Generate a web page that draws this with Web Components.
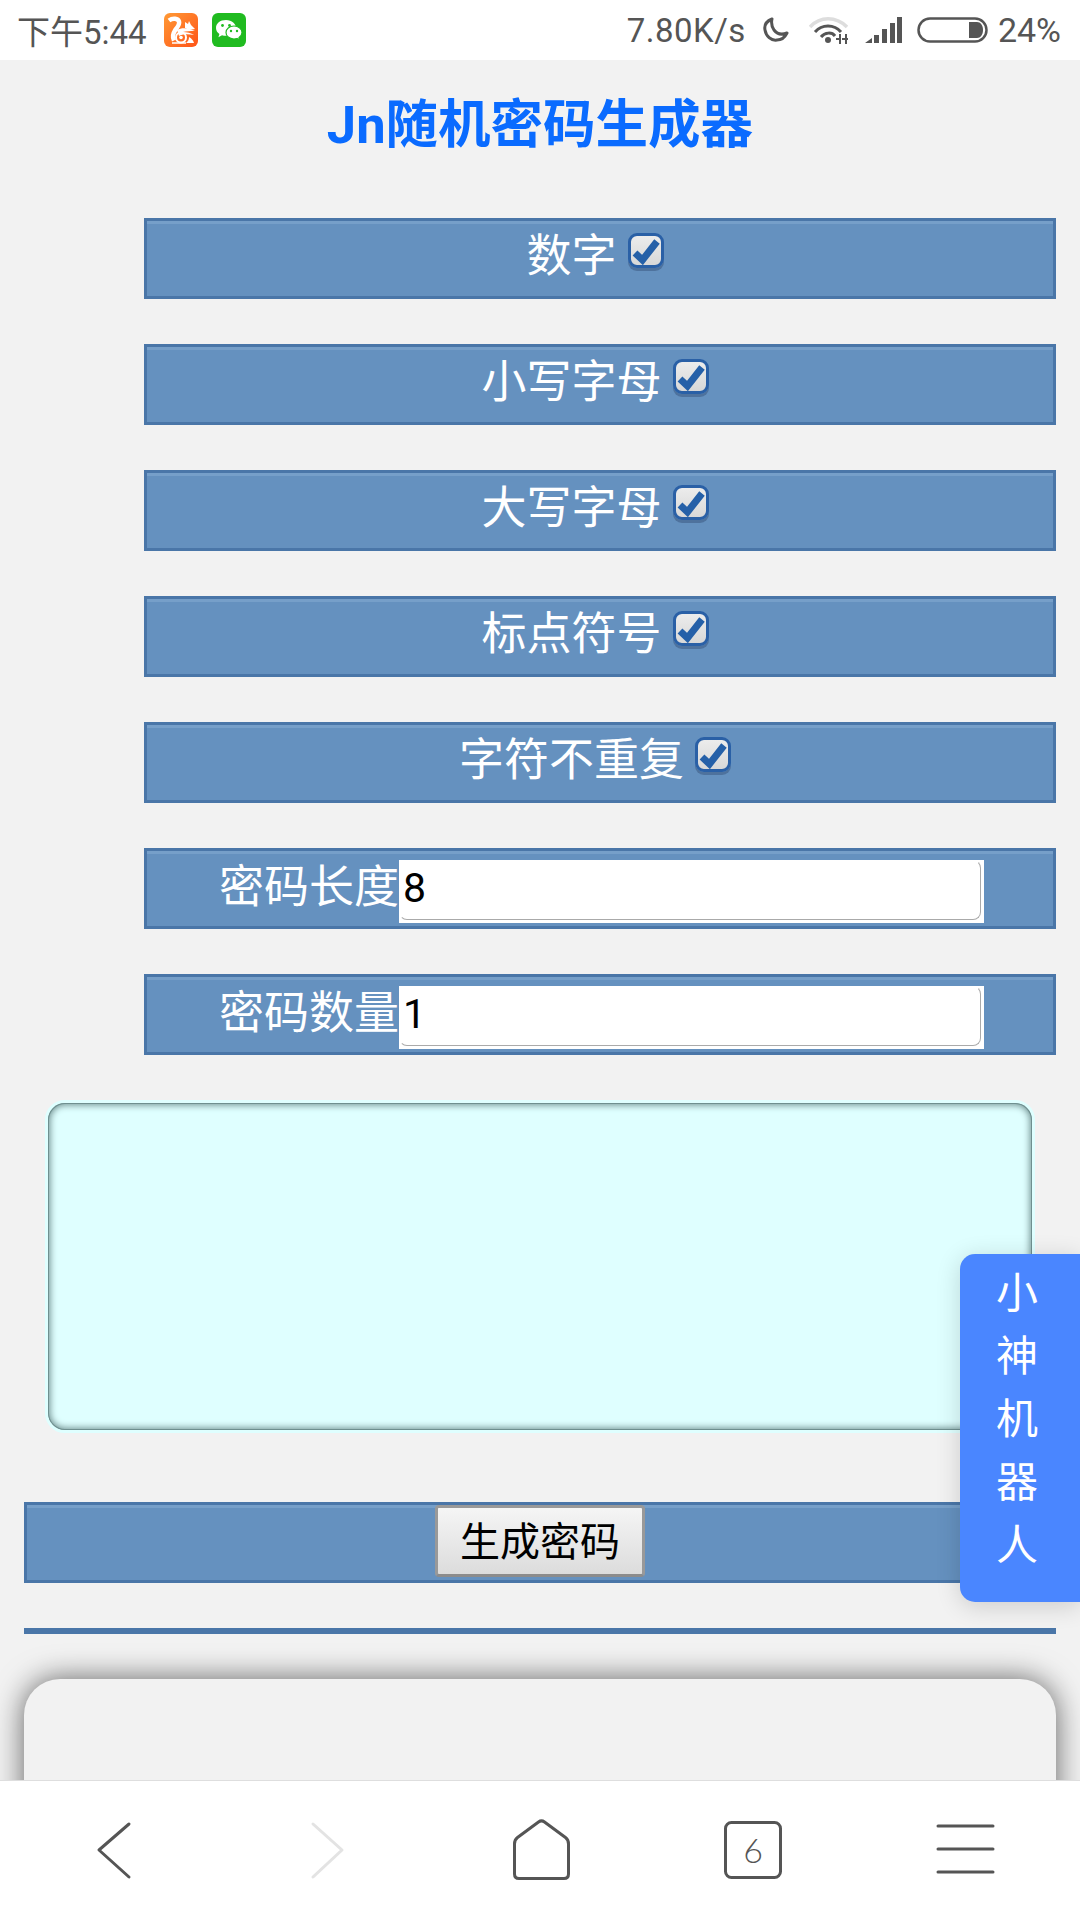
<!DOCTYPE html>
<html lang="zh">
<head>
<meta charset="utf-8">
<title>Jn随机密码生成器</title>
<style>
    html, body { margin: 0; padding: 0; height: 100%; }
    body {
        width: 1080px;
        height: 1920px;
        display: flex;
        flex-direction: column;
        overflow: hidden;
        background: #f2f2f2;
        font-family: Roboto, "Noto Sans CJK SC", sans-serif;
    }
</style>
</head>
<body>
<status-bar></status-bar>
<generator-page>
    <option-row>数字</option-row>
    <option-row>小写字母</option-row>
    <option-row>大写字母</option-row>
    <option-row>标点符号</option-row>
    <option-row>字符不重复</option-row>
    <number-row label="密码长度" value="8"></number-row>
    <number-row label="密码数量" value="1"></number-row>
</generator-page>
<bottom-nav></bottom-nav>

<script>
class StatusBar extends HTMLElement {
    constructor() {
        super();
        const shadowRoot = this.attachShadow({mode: 'open'});
        shadowRoot.innerHTML = `
            <style>
                :host {
                    display: flex;
                    align-items: center;
                    flex: none;
                    height: 60px;
                    padding: 0 19px 0 17px;
                    box-sizing: border-box;
                    background: #fff;
                    color: #555;
                    font: 33px Roboto, "Noto Sans CJK SC", sans-serif;
                    white-space: nowrap;
                }
                svg { display: block; flex: none; }
                .time { margin-right: 17px; }
                .app { margin-right: 14px; }
                .spacer { flex: 1; }
                .speed { margin-right: 16px; letter-spacing: .5px; }
                .moon { margin-right: 20px; }
                .wifi { margin-right: 17px; }
                .signal { margin-right: 15px; }
                .battery { margin-right: 10px; }
                .level { font-size: 34px; }
            </style>
            <span class="time">下午5:44</span>
            <svg class="app" width="34" height="34" viewBox="0 0 34 34">
                <defs>
                    <linearGradient id="uc" x1="0" y1="0" x2="1" y2="1">
                        <stop offset="0" stop-color="#ff9a35"/>
                        <stop offset="1" stop-color="#ff5418"/>
                    </linearGradient>
                </defs>
                <rect width="34" height="34" rx="6" fill="url(#uc)"/>
                <path d="M5 7.500c4-3 9-2 10 1 1 3-2 6-4 9-2 3-3 6-1 10" fill="none" stroke="#fff" stroke-width="4.500"/>
                <path d="M21 9l3 2 1-3 2 4 4 4-6 1-4-2z" fill="#fff"/>
                <path d="M13 17c5-3 12-2 18 1-5 0-9 0-12 1 4 0 8 1 11 3-6-1-12-1-15 1z" fill="#fff"/>
                <circle cx="17" cy="24.500" r="5" fill="none" stroke="#fff" stroke-width="2"/>
                <circle cx="17" cy="24.500" r="1.800" fill="#fff"/>
                <path d="M22 30h8c-1-3-2-4-5-6 0 3-1 4-3 6z" fill="#fff"/>
                <path d="M8 30h14" stroke="#fff" stroke-width="1.500"/>
            </svg>
            <svg class="app" width="34" height="34" viewBox="0 0 34 34">
                <rect width="34" height="34" rx="6" fill="#20bb20"/>
                <path d="M14 7c-6 0-10 3.500-10 8 0 2.500 1.300 4.500 3.400 6l-1 3.200 3.600-2c1.300.4 2.600.6 4 .6 6 0 10-3.800 10-7.800S20 7 14 7z" fill="#fff"/>
                <circle cx="10.500" cy="12.500" r="1.400" fill="#20bb20"/>
                <circle cx="17.500" cy="12.500" r="1.400" fill="#20bb20"/>
                <path d="M22 13c-4.800 0-8 3-8 6.500s3.200 6.500 8 6.500c1 0 2-.2 3-.5l2.800 1.600-.8-2.600c1.800-1.200 3-3 3-5 0-3.500-3.200-6.500-8-6.500z" fill="#fff" stroke="#20bb20" stroke-width="1.200"/>
                <circle cx="19" cy="18" r="1.200" fill="#20bb20"/>
                <circle cx="25" cy="18" r="1.200" fill="#20bb20"/>
            </svg>
            <span class="spacer"></span>
            <span class="speed">7.80K/s</span>
            <svg class="moon" width="27" height="26" viewBox="0 0 27 26">
                <path d="M10 2C5 4 2 8 3 13c1 6 6 11 12 10 4 0 8-3 10-7-5 2-10 1-13-3-2-3-3-7-2-11z" fill="none" stroke="#555" stroke-width="3" stroke-linejoin="round"/>
            </svg>
            <svg class="wifi" width="39" height="28" viewBox="0 0 39 28">
                <path d="M1 11C11 0 27 0 38 11" fill="none" stroke="#ddd" stroke-width="3.500"/>
                <path d="M6 16C13 8 25 8 32 16" fill="none" stroke="#555" stroke-width="3"/>
                <path d="M12 21C16 16 23 16 26 20" fill="none" stroke="#555" stroke-width="3"/>
                <circle cx="19" cy="24" r="3" fill="#555"/>
                <path d="M31 18v10M37 18v10M27 23h3M33 23h6" fill="none" stroke="#555" stroke-width="2"/>
            </svg>
            <svg class="signal" width="37" height="26" viewBox="0 0 37 26">
                <path d="M0 26l7-5v5zM9 26v-8h5v8zM17 26V12h5v14zM25 26V6h5v20zM32 26V0h5v26z" fill="#555"/>
            </svg>
            <svg class="battery" width="71" height="26" viewBox="0 0 71 26">
                <rect x="1.500" y="1.500" width="68" height="23" rx="11.500" fill="none" stroke="#555" stroke-width="2.500"/>
                <path d="M52 5h8c3.500 0 6 3.500 6 8s-2.500 8-6 8h-8z" fill="#555"/>
            </svg>
            <span class="level">24%</span>
        `;
    }
}

class OptionRow extends HTMLElement {
    constructor() {
        super();
        const shadowRoot = this.attachShadow({mode: 'open'});
        shadowRoot.innerHTML = `
            <style>
                :host {
                    display: flex;
                    align-items: center;
                    justify-content: center;
                    gap: 11px;
                    height: 81px;
                    margin-left: 144px;
                    padding: 0 10px 0 0;
                    box-sizing: border-box;
                    background: #6591bf;
                    border: 3px solid #4a76a8;
                    box-shadow: inset 0 3px 0 #769fc9;
                    color: #fff;
                    font-size: 45px;
                    line-height: 60px;
                }
                .label { position: relative; top: -2px; }
                .box {
                    width: 36px;
                    height: 35px;
                    margin-top: -16px;
                    box-sizing: border-box;
                    border: 3px solid #2a60a6;
                    border-radius: 9px;
                    background: linear-gradient(#ececec, #d8d8d8);
                    box-shadow: 0 3px 0 rgba(60, 90, 130, .55);
                }
                svg { display: block; }
            </style>
            <span class="label"><slot></slot></span>
            <div class="box">
                <svg width="30" height="29" viewBox="0 0 30 29">
                    <path d="M4 17l7.500 7L26 5.500" fill="none" stroke="#2560a8" stroke-width="7"/>
                </svg>
            </div>
        `;
    }
}

class NumberRow extends HTMLElement {
    constructor() {
        super();
        const shadowRoot = this.attachShadow({mode: 'open'});
        shadowRoot.innerHTML = `
            <style>
                :host {
                    display: flex;
                    align-items: flex-start;
                    height: 81px;
                    margin-left: 144px;
                    padding: 9px 0 0 72px;
                    box-sizing: border-box;
                    background: #6591bf;
                    border: 3px solid #4a76a8;
                    box-shadow: inset 0 3px 0 #769fc9;
                    color: #fff;
                    font-size: 45px;
                }
                .label { width: 180px; line-height: 56px; }
                .field {
                    width: 585px;
                    height: 63px;
                    box-sizing: border-box;
                    padding: 0 3px 3px 0;
                    background: #fff;
                }
                .value {
                    height: 60px;
                    box-sizing: border-box;
                    padding-left: 3px;
                    border: 1px solid #aaa;
                    border-top-color: #fff;
                    border-left-color: #fff;
                    border-radius: 8px;
                    color: #000;
                    font-size: 41px;
                    line-height: 55px;
                }
            </style>
            <span class="label"></span>
            <div class="field"><div class="value"></div></div>
        `;
        shadowRoot.querySelector('.label').textContent = this.getAttribute('label');
        shadowRoot.querySelector('.value').textContent = this.getAttribute('value');
    }
}

class OutputBox extends HTMLElement {
    constructor() {
        super();
        const shadowRoot = this.attachShadow({mode: 'open'});
        shadowRoot.innerHTML = `
            <style>
                :host {
                    display: block;
                    height: 333px;
                    margin: 45px 45px 0;
                    box-sizing: border-box;
                    background: #dfffff;
                    border: 3px solid #dfffff;
                    border-radius: 20px;
                }
                .inner {
                    height: 100%;
                    box-sizing: border-box;
                    border-radius: 17px;
                    box-shadow: inset 0 0 0 1px #6f8f8f, inset 0 0 7px 2px #6d8d8d;
                }
            </style>
            <div class="inner"></div>
        `;
    }
}

class GenerateRow extends HTMLElement {
    constructor() {
        super();
        const shadowRoot = this.attachShadow({mode: 'open'});
        shadowRoot.innerHTML = `
            <style>
                :host {
                    display: flex;
                    justify-content: center;
                    height: 81px;
                    margin: 69px 24px 0;
                    box-sizing: border-box;
                    background: #6591bf;
                    border: 3px solid #4a76a8;
                    box-shadow: inset 0 3px 0 #769fc9;
                }
                .button {
                    display: flex;
                    align-items: center;
                    justify-content: center;
                    width: 210px;
                    height: 72px;
                    padding-bottom: 4px;
                    box-sizing: border-box;
                    border: 3px solid #999;
                    border-bottom-color: #8c8c8c;
                    border-radius: 4px;
                    background: linear-gradient(#f5f5f5, #dcdcdc);
                    color: #000;
                    font-size: 40px;
                }
            </style>
            <div class="button">生成密码</div>
        `;
    }
}

class ChatTab extends HTMLElement {
    constructor() {
        super();
        const shadowRoot = this.attachShadow({mode: 'open'});
        shadowRoot.innerHTML = `
            <style>
                :host {
                    position: absolute;
                    right: 0;
                    top: 1194px;
                    width: 120px;
                    height: 348px;
                    padding: 8px 0 0 36px;
                    box-sizing: border-box;
                    background: #4a86ff;
                    border-radius: 15px 0 0 15px;
                    box-shadow: 0 4px 24px rgba(0, 0, 0, .16);
                    color: #fff;
                    font-size: 42px;
                    line-height: 63px;
                }
                div { width: 42px; }
            </style>
            <div>小</div><div>神</div><div>机</div><div>器</div><div>人</div>
        `;
    }
}

class GeneratorPage extends HTMLElement {
    constructor() {
        super();
        const shadowRoot = this.attachShadow({mode: 'open'});
        shadowRoot.innerHTML = `
            <style>
                :host {
                    display: block;
                    position: relative;
                    flex: 1;
                    min-height: 0;
                    overflow: hidden;
                    background: #f2f2f2;
                }
                h1 {
                    margin: 0;
                    height: 158px;
                    padding-top: 31px;
                    box-sizing: border-box;
                    color: #0a6bff;
                    font-size: 52.500px;
                    font-weight: 700;
                    line-height: 68px;
                    text-align: center;
                }
                .rows { display: flex; flex-direction: column; gap: 45px; }
                ::slotted(*) { margin-right: 24px !important; }
                .rule { height: 6px; margin: 45px 24px 0; background: #4a76a8; }
                .card {
                    height: 200px;
                    margin: 45px 24px 0;
                    background: #f2f2f2;
                    border-radius: 36px 36px 0 0;
                    box-shadow: 0 0 30px rgba(0, 0, 0, .6);
                }
            </style>
            <h1>Jn随机密码生成器</h1>
            <div class="rows"><slot></slot></div>
            <output-box></output-box>
            <generate-row></generate-row>
            <div class="rule"></div>
            <div class="card"></div>
            <chat-tab></chat-tab>
        `;
    }
}

class BottomNav extends HTMLElement {
    constructor() {
        super();
        const shadowRoot = this.attachShadow({mode: 'open'});
        shadowRoot.innerHTML = `
            <style>
                :host {
                    display: block;
                    position: relative;
                    flex: none;
                    height: 140px;
                    box-sizing: border-box;
                    background: #fff;
                    border-top: 1px solid #dedede;
                }
                svg { display: block; }
                .tab-count {
                    position: absolute;
                    left: 724px;
                    top: 40px;
                    width: 58px;
                    height: 58px;
                    color: #555;
                    font: 300 34px/58px Lato, sans-serif;
                    text-align: center;
                }
            </style>
            <svg width="1080" height="139" viewBox="0 1781 1080 139" fill="none" stroke="#555" stroke-width="3" stroke-linecap="round" stroke-linejoin="round">
                <path d="M129 1824l-30 26 30 27" />
                <path d="M313 1824l29 26-29 27" stroke="#e3e3e3"/>
                <path d="M514.500 1844c0-3 1-5 3-6.500l21-15.500c2-1.500 4-1.500 6 0l21 15.500c2 1.500 3 3.500 3 6.500v30c0 3-1.500 4.500-4.500 4.500h-45c-3 0-4.500-1.500-4.500-4.500z"/>
                <rect x="725.500" y="1822.500" width="55" height="55" rx="6"/>
                <path d="M938 1826h55M938 1849h55M938 1872h55"/>
            </svg>
            <span class="tab-count">6</span>
        `;
    }
}

customElements.define('status-bar', StatusBar);
customElements.define('option-row', OptionRow);
customElements.define('number-row', NumberRow);
customElements.define('output-box', OutputBox);
customElements.define('generate-row', GenerateRow);
customElements.define('chat-tab', ChatTab);
customElements.define('generator-page', GeneratorPage);
customElements.define('bottom-nav', BottomNav);
</script>
</body>
</html>
